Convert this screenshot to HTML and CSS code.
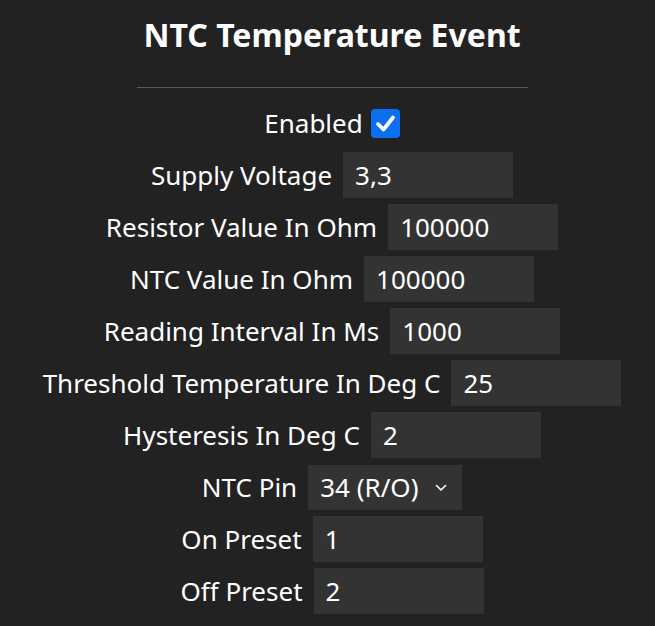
FILE: index.html
```html
<!DOCTYPE html>
<html>
<head>
<meta charset="utf-8">
<link rel="stylesheet" href="styles.css">
</head>
<body>
<div class="page">
  <h1 class="title">NTC Temperature Event</h1>
  <hr class="rule">
  <div class="form">
    <label class="row row-check"><span class="label">Enabled</span><span class="check"><svg viewBox="0 0 29 29" width="29" height="29"><path d="M7 15 L12.5 20.5 L22 8.5" fill="none" stroke="#fff" stroke-width="3.8" stroke-linecap="round" stroke-linejoin="round"/></svg></span></label>
    <label class="row"><span class="label">Supply Voltage</span><input class="field" type="text" value="3,3"></label>
    <label class="row"><span class="label">Resistor Value In Ohm</span><input class="field" type="text" value="100000"></label>
    <label class="row"><span class="label">NTC Value In Ohm</span><input class="field" type="text" value="100000"></label>
    <label class="row"><span class="label">Reading Interval In Ms</span><input class="field" type="text" value="1000"></label>
    <label class="row"><span class="label">Threshold Temperature In Deg C</span><input class="field" type="text" value="25"></label>
    <label class="row"><span class="label">Hysteresis In Deg C</span><input class="field" type="text" value="2"></label>
    <label class="row"><span class="label">NTC Pin</span><span class="select"><span class="select-text">34 (R/O)</span><svg class="chev" viewBox="0 0 12 8" width="12" height="8"><path d="M1.5 1.5 L6 6 L10.5 1.5" fill="none" stroke="#fff" stroke-width="1.6" stroke-linecap="round" stroke-linejoin="round"/></svg></span></label>
    <label class="row"><span class="label">On Preset</span><input class="field" type="text" value="1"></label>
    <label class="row"><span class="label">Off Preset</span><input class="field" type="text" value="2"></label>
  </div>
</div>
</body>
</html>
```

FILE: styles.css
```css
html, body {
  margin: 0;
  padding: 0;
  background: #222222;
}
body {
  font-family: "Noto Sans", "Open Sans", sans-serif;
  color: #ffffff;
}
.page {
  padding-left: 9px;
  display: flex;
  flex-direction: column;
  align-items: center;
}
.title {
  margin: 14px 0 0 0;
  font-size: 32px;
  font-weight: bold;
  line-height: 42px;
}
.rule {
  width: 391px;
  margin: 31px 0 12px 0;
  border: 0;
  border-top: 1px solid #5a5a5a;
  height: 0;
}
.form {
  display: flex;
  flex-direction: column;
  align-items: center;
  gap: 6px;
}
.row {
  display: flex;
  align-items: center;
  gap: 11px;
  height: 46px;
}
.row-check {
  gap: 8px;
}
.label {
  font-size: 26px;
}
.field {
  box-sizing: border-box;
  width: 170px;
  height: 46px;
  border: 0;
  outline: none;
  background: #333333;
  color: #ffffff;
  font-family: inherit;
  font-size: 26px;
  padding: 0 12px;
}
.check {
  width: 29px;
  height: 29px;
  border-radius: 4px;
  background: #0b6ff2;
  display: flex;
  align-items: center;
  justify-content: center;
}
.select {
  box-sizing: border-box;
  width: 154px;
  height: 45px;
  background: #333333;
  display: flex;
  align-items: center;
  justify-content: space-between;
  padding: 0 15px 0 12px;
  font-size: 26px;
}
.chev {
  margin-top: 2px;
}
```
